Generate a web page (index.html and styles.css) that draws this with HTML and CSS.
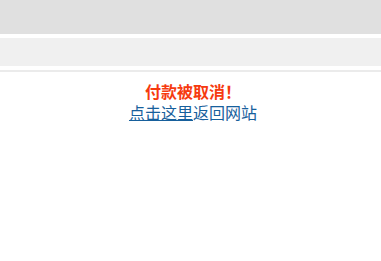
FILE: index.html
```html
<!DOCTYPE html>
<html lang="zh-CN">
<head>
    <meta charset="UTF-8">
    <title>付款被取消</title>
    <link rel="stylesheet" href="styles.css">
</head>
<body>

    <div class="top-bar"></div>
    <div class="nav-bar"></div>

    <div class="content">
        <div class="title">付款被取消！</div>
        <div class="back"><a href="#">点击这里</a>返回网站</div>
    </div>

</body>
</html>
```

FILE: styles.css
```css
body {
    margin: 0;
    background-color: #fff;
    font-family: "Noto Sans CJK SC", "Liberation Sans", sans-serif;
    font-size: 16px;
}

.top-bar {
    height: 34px;
    background-color: #e0e0e0;
    margin-bottom: 4px;
}

.nav-bar {
    height: 28px;
    background-color: #f0f0f0;
    margin-bottom: 4px;
}

.content {
    border-top: 2px solid #ebebeb;
    padding: 9px 0 0 5px;
    text-align: center;
    line-height: 21px;
}

.title {
    color: #f63a0f;
    font-weight: bold;
}

.back {
    color: #17609c;
}

.back a {
    color: #17609c;
    text-decoration: underline;
}
```
